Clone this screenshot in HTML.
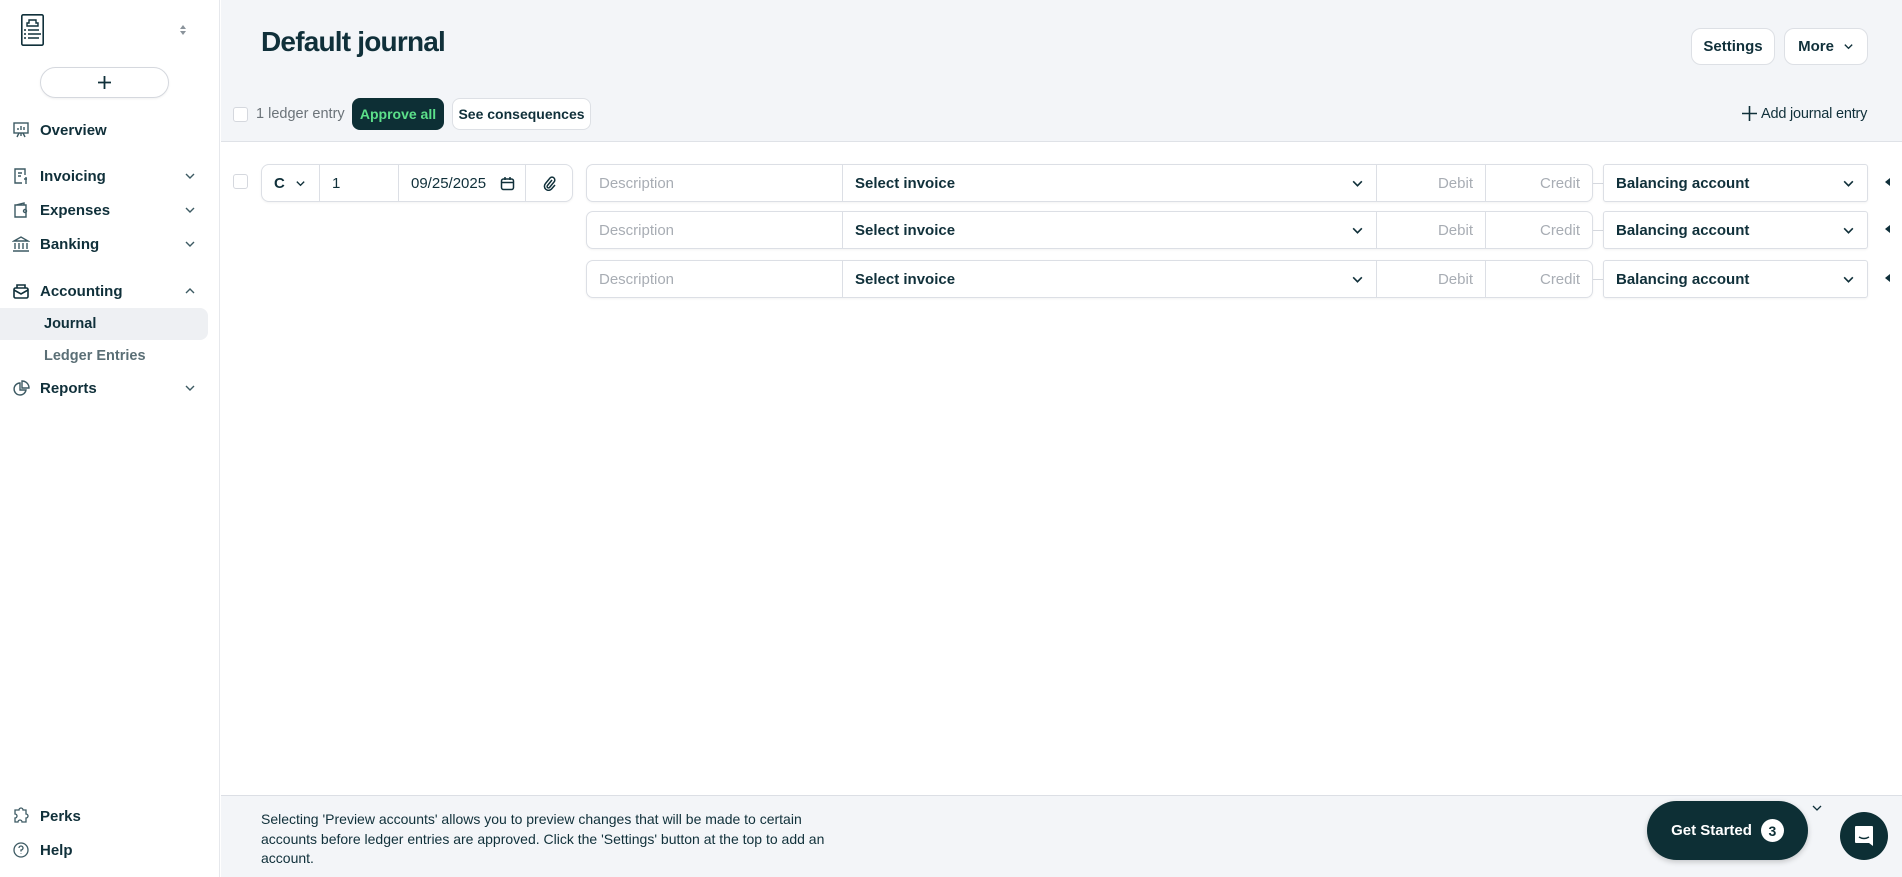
<!DOCTYPE html>
<html><head><meta charset="utf-8"><style>
*{box-sizing:border-box;margin:0;padding:0}
body{width:1902px;height:877px;overflow:hidden;font-family:"Liberation Sans",sans-serif;color:#10303a;background:#fff;position:relative}
.abs{position:absolute}
.side{left:0;top:0;width:220px;height:877px;background:#fff;border-right:1px solid #e6e8ec}
.nav{position:absolute;left:0;width:208px;height:32px;display:flex;align-items:center;font-size:15px;font-weight:bold;color:#10303a}
.nav svg.i{position:absolute;left:12px;width:18px;height:18px}
.nav span{position:absolute;left:40px}
.nav .chev{position:absolute;left:184px;width:12px;height:12px}
.main-top{left:221px;top:0;width:1681px;height:142px;background:#f3f5f8;border-bottom:1px solid #dfe2e7}
.btn{position:absolute;background:#fff;border:1px solid #dde0e5;border-radius:10px;font-size:15px;font-weight:bold;display:flex;align-items:center;justify-content:center;color:#10303a}
.cb{position:absolute;width:15px;height:15px;border:1px solid #d5d8de;border-radius:3px;background:#fff}
.grp{position:absolute;border:1px solid #dcdfe5;border-radius:8px;background:#fff;box-shadow:0 1px 2px rgba(0,0,0,.05);display:flex}
.cell{height:100%;border-right:1px solid #dcdfe5;display:flex;align-items:center;font-size:15px;position:relative}
.cell:last-child{border-right:none}
.ph{color:#a8adb4}
.bold{font-weight:bold;color:#10303a}
</style></head><body>
<div class="abs side">
 <svg class="abs" style="left:21px;top:14px" width="23" height="32" viewBox="0 0 23 32"><rect x="0.8" y="0.8" width="21.4" height="30.4" rx="1.5" fill="none" stroke="#10303a" stroke-width="1.6"/><path d="M8 6h7v3h2v3H6V9h2z" fill="none" stroke="#10303a" stroke-width="1.4"/><path d="M3 16h2M7 16h11M3 20h2M7 20h13M3 24h2M7 24h11" stroke="#10303a" stroke-width="1.6"/></svg>
 <svg class="abs" style="left:179px;top:24px" width="8" height="12" viewBox="0 0 8 12"><path d="M1 5L4 1L7 5zM1 7L4 11L7 7z" fill="#8a939b"/></svg>
 <div class="abs" style="left:40px;top:67px;width:129px;height:31px;border:1px solid #d5d8de;border-radius:16px;box-shadow:0 1px 2px rgba(0,0,0,.06)"><svg class="abs" style="left:56px;top:7px" width="15" height="15"><path d="M7.5 1v13M1 7.5h13" stroke="#10303a" stroke-width="1.8"/></svg></div>

 <div class="nav" style="top:114px"><svg class="i" viewBox="0 0 18 18" fill="none" stroke="#3d5a63" stroke-width="1.4"><rect x="2" y="2" width="14" height="10"/><path d="M6 9V7M9 9V5M12 9V6M7 12l-2 4M11 12l2 4M9 12v3"/></svg><span>Overview</span></div>
 <div class="nav" style="top:160px"><svg class="i" viewBox="0 0 18 18" fill="none" stroke="#3d5a63" stroke-width="1.4"><path d="M13 8V2H3v14h7"/><path d="M6 6h4M6 9h3M14 10v7M12 12h3"/></svg><span>Invoicing</span><svg class="chev" viewBox="0 0 12 12"><path d="M2 4l4 4 4-4" fill="none" stroke="#3d5a63" stroke-width="1.4"/></svg></div>
 <div class="nav" style="top:194px"><svg class="i" viewBox="0 0 18 18" fill="none" stroke="#3d5a63" stroke-width="1.4"><path d="M3 4h11v12H3zM4 4l8-2v2"/><circle cx="13" cy="10" r="1.5"/></svg><span>Expenses</span><svg class="chev" viewBox="0 0 12 12"><path d="M2 4l4 4 4-4" fill="none" stroke="#3d5a63" stroke-width="1.4"/></svg></div>
 <div class="nav" style="top:228px"><svg class="i" viewBox="0 0 18 18" fill="none" stroke="#3d5a63" stroke-width="1.4"><path d="M2 6l7-4 7 4zM3 8v6M7 8v6M11 8v6M15 8v6M1 16h16"/></svg><span>Banking</span><svg class="chev" viewBox="0 0 12 12"><path d="M2 4l4 4 4-4" fill="none" stroke="#3d5a63" stroke-width="1.4"/></svg></div>
 <div class="nav" style="top:275px"><svg class="i" viewBox="0 0 18 18" fill="none" stroke="#10303a" stroke-width="1.6"><rect x="2" y="6" width="14" height="10" rx="1.5"/><path d="M5 6V3h8v3M2 8l7 4 7-4"/></svg><span>Accounting</span><svg class="chev" viewBox="0 0 12 12"><path d="M2 8l4-4 4 4" fill="none" stroke="#3d5a63" stroke-width="1.4"/></svg></div>
 <div class="abs" style="left:0;top:308px;width:208px;height:32px;background:#eef0f3;border-radius:0 8px 8px 0"></div>
 <div class="abs" style="left:44px;top:316px;font-size:14.5px;font-weight:bold">Journal</div>
 <div class="abs" style="left:44px;top:348px;font-size:14.5px;font-weight:bold;color:#5b6f76">Ledger Entries</div>
 <div class="nav" style="top:372px"><svg class="i" viewBox="0 0 18 18" fill="none" stroke="#3d5a63" stroke-width="1.4"><path d="M8 4a6 6 0 1 0 6 7H8z"/><path d="M10 2v7h7a7 7 0 0 0-7-7z"/></svg><span>Reports</span><svg class="chev" viewBox="0 0 12 12"><path d="M2 4l4 4 4-4" fill="none" stroke="#3d5a63" stroke-width="1.4"/></svg></div>
 <div class="nav" style="top:800px"><svg class="i" viewBox="0 0 18 18" fill="none" stroke="#3d5a63" stroke-width="1.3"><path d="M7 3a2 2 0 0 1 4 0h3v4a2 2 0 0 1 0 4v4h-4a2 2 0 0 0-4 0H3v-4a2 2 0 0 0 0-4V3z"/></svg><span>Perks</span></div>
 <div class="nav" style="top:834px"><svg class="i" viewBox="0 0 18 18" fill="none" stroke="#3d5a63" stroke-width="1.3"><circle cx="9" cy="9" r="7"/><path d="M7 7a2 2 0 1 1 2 2v1.5M9 12.5v.5"/></svg><span>Help</span></div>
</div>

<div class="abs main-top"></div>
<div class="abs" style="left:261px;top:26px;font-size:28px;font-weight:bold;letter-spacing:-0.8px">Default journal</div>
<div class="btn" style="left:1691px;top:28px;width:84px;height:37px">Settings</div>
<div class="btn" style="left:1784px;top:28px;width:84px;height:37px">More<svg style="margin-left:9px" width="11" height="11" viewBox="0 0 12 12"><path d="M2 4l4 4 4-4" fill="none" stroke="#10303a" stroke-width="1.5"/></svg></div>

<div class="cb" style="left:233px;top:107px"></div>
<div class="abs" style="left:256px;top:106px;font-size:14.5px;color:#6b7379">1 ledger entry</div>
<div class="abs" style="left:352px;top:98px;width:92px;height:32px;background:#0d2f35;border-radius:8px;color:#5ce08a;font-size:14px;font-weight:bold;display:flex;align-items:center;justify-content:center">Approve all</div>
<div class="btn" style="left:452px;top:98px;width:139px;height:32px;font-size:14px;border-radius:8px">See consequences</div>
<svg class="abs" style="left:1742px;top:106px" width="15" height="15"><path d="M7.5 0v15M0 7.5h15" stroke="#10303a" stroke-width="1.6"/></svg>
<div class="abs" style="left:1761px;top:106px;font-size:14.5px;letter-spacing:-0.2px">Add journal entry</div>

<div class="cb" style="left:233px;top:174px"></div>
<div class="grp" style="left:261px;top:164px;width:312px;height:38px">
 <div class="cell bold" style="width:58px;padding-left:12px">C<svg style="margin-left:10px" width="11" height="11" viewBox="0 0 12 12"><path d="M2 4l4 4 4-4" fill="none" stroke="#10303a" stroke-width="1.5"/></svg></div>
 <div class="cell" style="width:79px;padding-left:12px">1</div>
 <div class="cell" style="width:127px;padding-left:12px">09/25/2025<svg style="position:absolute;right:10px" width="15" height="15" viewBox="0 0 15 15" fill="none" stroke="#10303a" stroke-width="1.5"><rect x="1.5" y="3" width="12" height="10.5" rx="2"/><path d="M1.5 6.5h12M5 1v3M10 1v3"/></svg></div>
 <div class="cell" style="flex:1;justify-content:center"><svg width="13" height="15" viewBox="0 0 13 15" fill="none" stroke="#10303a" stroke-width="1.5"><path d="M9 4L4.5 9.5a1.4 1.4 0 0 0 2 2L11 6a2.8 2.8 0 0 0-4-4L2.5 7.5a4 4 0 0 0 6 5.5L12 9"/></svg></div>
</div>

<div id="rows"></div>
<script>
var h='';[164,211,260].forEach(function(t){
h+='<div class="grp" style="left:586px;top:'+t+'px;width:1007px;height:38px;border-radius:7px">'+
'<div class="cell ph" style="width:256px;padding-left:12px">Description</div>'+
'<div class="cell bold" style="width:534px;padding-left:12px">Select invoice<svg style="position:absolute;right:12px" width="13" height="13" viewBox="0 0 12 12"><path d="M2 4l4 4 4-4" fill="none" stroke="#10303a" stroke-width="1.5"/></svg></div>'+
'<div class="cell ph" style="width:109px;justify-content:flex-end;padding-right:12px">Debit</div>'+
'<div class="cell ph" style="flex:1;justify-content:flex-end;padding-right:12px">Credit</div></div>'+
'<div class="abs" style="left:1593px;top:'+(t+19)+'px;width:10px;height:1px;background:#d5d8de"></div>'+
'<div class="grp" style="left:1603px;top:'+t+'px;width:265px;height:38px;border-radius:3px"><div class="cell bold" style="width:100%;padding-left:12px">Balancing account<svg style="position:absolute;right:12px" width="13" height="13" viewBox="0 0 12 12"><path d="M2 4l4 4 4-4" fill="none" stroke="#10303a" stroke-width="1.5"/></svg></div></div>'+
'<svg class="abs" style="left:1885px;top:'+(t+14)+'px" width="5" height="8"><path d="M5 0L0 4L5 8z" fill="#10303a"/></svg>';
});document.getElementById('rows').innerHTML=h;
</script>

<div class="abs" style="left:221px;top:795px;width:1681px;height:82px;background:#f3f5f8;border-top:1px solid #dcdfe5"></div>
<div class="abs" style="left:261px;top:810px;width:600px;font-size:14px;line-height:19.5px;color:#10303a">Selecting 'Preview accounts' allows you to preview changes that will be made to certain accounts before ledger entries are approved. Click the 'Settings' button at the top to add an account.</div>
<div class="abs" style="left:1647px;top:801px;width:161px;height:59px;background:#0d2f35;border-radius:30px;color:#fff;font-size:15px;font-weight:bold;display:flex;align-items:center;justify-content:center;box-shadow:0 2px 6px rgba(0,0,0,.2)">Get Started<span style="margin-left:9px;width:23px;height:23px;border-radius:50%;background:#fff;color:#0d2f35;display:flex;align-items:center;justify-content:center;font-size:14px">3</span></div>
<svg class="abs" style="left:1812px;top:804px" width="10" height="8"><path d="M1 2l4 4 4-4" fill="none" stroke="#10303a" stroke-width="1.3"/></svg>
<div class="abs" style="left:1840px;top:812px;width:48px;height:48px;border-radius:50%;background:#0d2f35"><svg class="abs" style="left:14px;top:13px" width="20" height="22" viewBox="0 0 20 22"><path d="M2 1h16a1 1 0 0 1 1 1v19l-4-3H2a1 1 0 0 1-1-1V2a1 1 0 0 1 1-1z" fill="#fff"/><path d="M5 12q5 3 10 0" fill="none" stroke="#0d2f35" stroke-width="1.4"/></svg></div>
</body></html>
